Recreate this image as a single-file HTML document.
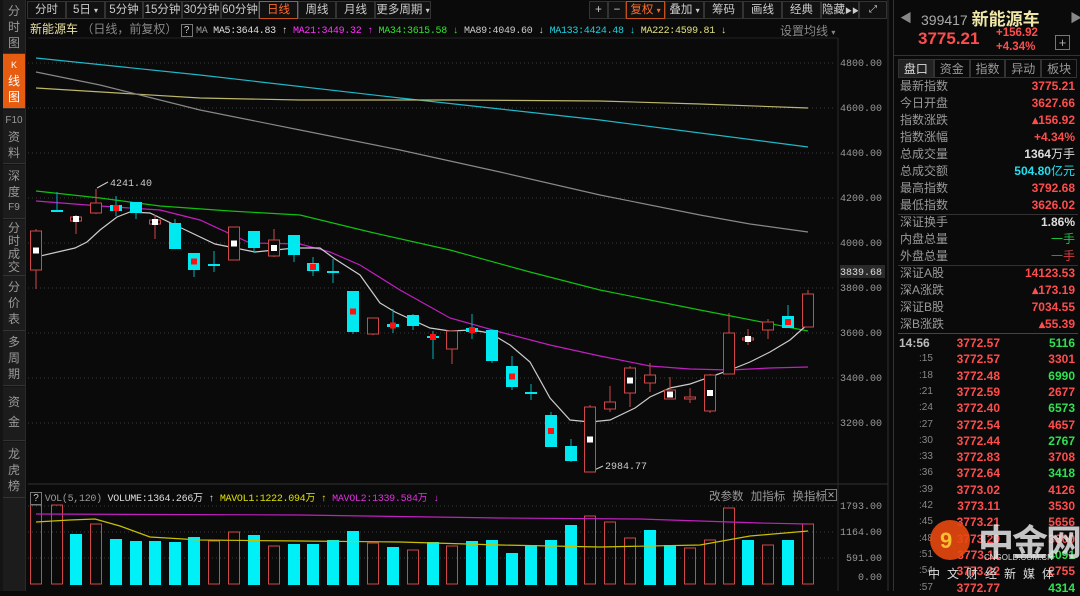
<!DOCTYPE html>
<html><head><meta charset="utf-8"><style>
*{margin:0;padding:0;box-sizing:border-box}
body{width:1080px;height:591px;background:#0a0a0a;overflow:hidden;font-family:"Liberation Sans","Noto Sans CJK SC",sans-serif;position:relative;color:#bbb}
.abs{position:absolute}
#side{left:0;top:0;width:26px;height:591px;background:#141414;border-right:1px solid #2a2a2a}
.si{position:absolute;left:3px;width:22px;background:#1c1c1c;border-bottom:1px solid #333;color:#999;font-size:12px;line-height:16px;text-align:center;display:flex;flex-direction:column;justify-content:center;overflow:hidden}
.si div{height:16px}
.si.on{background:#e65c10;color:#fff}
.tb{position:absolute;top:1px;height:18px;border:1px solid #333;background:#111;color:#ccc;font-size:11.5px;line-height:16px;text-align:center;white-space:nowrap;overflow:hidden}
.tb.on{border-color:#c4501a;color:#ff6a2a}
.mono{font-family:"Liberation Mono","Noto Sans CJK SC",monospace}
#rp{left:893px;top:0;width:187px;height:591px;background:#0a0a0a;border-left:1px solid #333}
.row{position:absolute;left:6px;width:175px;height:17px;font-size:12px;line-height:17px}
.row .l{color:#999;position:absolute;left:0}
.row .v{position:absolute;right:0;font-weight:bold;color:#ff4d4d}
.tk{position:absolute;left:5px;width:176px;height:16px;font-size:12px;line-height:16px}
.tk .t{position:absolute;left:0;color:#888}
.tk .p{position:absolute;left:29px;color:#ff4d4d;font-weight:bold;width:72px;text-align:right}
.tk .q{position:absolute;right:0;font-weight:bold}
</style></head><body>

<div id="side" class="abs">
<div class="si" style="top:0;height:54px"><div>分</div><div>时</div><div>图</div></div>
<div class="si on" style="top:54px;height:55px"><div style="font-size:9px">K</div><div>线</div><div>图</div></div>
<div class="si" style="top:110px;height:54px"><div style="font-size:10px">F10</div><div>资</div><div>料</div></div>
<div class="si" style="top:165px;height:54px"><div>深</div><div>度</div><div style="font-size:10px">F9</div></div>
<div class="si" style="top:220px;height:56px;line-height:13px"><div style="height:13px">分</div><div style="height:13px">时</div><div style="height:13px">成</div><div style="height:13px">交</div></div>
<div class="si" style="top:276px;height:55px"><div>分</div><div>价</div><div>表</div></div>
<div class="si" style="top:331px;height:55px"><div>多</div><div>周</div><div>期</div></div>
<div class="si" style="top:387px;height:54px"><div style="height:20px">资</div><div style="height:20px">金</div></div>
<div class="si" style="top:442px;height:56px"><div>龙</div><div>虎</div><div>榜</div></div>
<div class="si" style="top:498px;height:93px;border:none"></div>
</div>

<div class="tb" style="left:27px;width:39px">分时</div>
<div class="tb" style="left:66px;width:39px">5日 <span style="font-size:8px">▾</span></div>
<div class="tb" style="left:105px;width:38px">5分钟</div>
<div class="tb" style="left:143px;width:39px">15分钟</div>
<div class="tb" style="left:182px;width:39px">30分钟</div>
<div class="tb" style="left:221px;width:38px">60分钟</div>
<div class="tb on" style="left:259px;width:39px">日线</div>
<div class="tb" style="left:298px;width:38px">周线</div>
<div class="tb" style="left:336px;width:39px">月线</div>
<div class="tb" style="left:375px;width:56px">更多周期 <span style="font-size:8px">▾</span></div>
<div class="tb" style="left:589px;width:19px">+</div>
<div class="tb" style="left:608px;width:18px">−</div>
<div class="tb on" style="left:626px;width:39px">复权 <span style="font-size:8px">▾</span></div>
<div class="tb" style="left:665px;width:39px">叠加 <span style="font-size:8px">▾</span></div>
<div class="tb" style="left:704px;width:39px">筹码</div>
<div class="tb" style="left:743px;width:39px">画线</div>
<div class="tb" style="left:782px;width:39px">经典</div>
<div class="tb" style="left:821px;width:38px">隐藏<span style="font-size:7px">▶▶</span></div>
<div class="tb" style="left:859px;width:28px;font-size:10px">⤢</div>

<div class="abs" style="left:30px;top:22px;font-size:12px;line-height:14px;white-space:nowrap">
<span style="color:#e8e0a0">新能源车</span><span style="color:#888"> （日线，前复权）</span>
<span style="display:inline-block;border:1px solid #777;width:12px;height:13px;font-size:10px;line-height:11px;text-align:center;color:#ccc">?</span>
<span class="mono" style="font-size:10px;letter-spacing:-0.3px"><span style="color:#999">MA</span> <span style="color:#ddd">MA5:3644.83 ↑</span> <span style="color:#ff30ff">MA21:3449.32 ↑</span> <span style="color:#30e030">MA34:3615.58 ↓</span> <span style="color:#ccc">MA89:4049.60 ↓</span> <span style="color:#20d0e0">MA133:4424.48 ↓</span> <span style="color:#e0e080">MA222:4599.81 ↓</span></span>
</div>
<div class="abs" style="left:780px;top:22px;font-size:12px;color:#888;white-space:nowrap">设置均线 <span style="font-size:8px">▾</span></div>

<svg class="abs" style="left:0;top:0" width="893" height="591" id="ch">
<line x1="28" y1="38" x2="838" y2="38" stroke="#222"/>
<line x1="838" y1="38" x2="838" y2="591" stroke="#2a2a2a"/>
<line x1="888" y1="0" x2="888" y2="591" stroke="#333"/>
<line x1="28" y1="484" x2="888" y2="484" stroke="#333"/>
<g stroke="#3a3a3a" stroke-dasharray="1,3">
<line x1="28" y1="63" x2="836" y2="63"/><line x1="28" y1="108" x2="836" y2="108"/><line x1="28" y1="153" x2="836" y2="153"/><line x1="28" y1="198" x2="836" y2="198"/><line x1="28" y1="243" x2="836" y2="243"/><line x1="28" y1="288" x2="836" y2="288"/><line x1="28" y1="333" x2="836" y2="333"/><line x1="28" y1="378" x2="836" y2="378"/><line x1="28" y1="423" x2="836" y2="423"/>
<line x1="28" y1="506" x2="836" y2="506"/><line x1="28" y1="532" x2="836" y2="532"/><line x1="28" y1="558" x2="836" y2="558"/>
</g>
<g font-family="Liberation Mono,monospace" font-size="10" fill="#999" text-anchor="end">
<text x="882" y="66">4800.00</text><text x="882" y="111">4600.00</text><text x="882" y="156">4400.00</text><text x="882" y="201">4200.00</text><text x="882" y="246">4000.00</text><text x="882" y="291">3800.00</text><text x="882" y="336">3600.00</text><text x="882" y="381">3400.00</text><text x="882" y="426">3200.00</text>
<text x="882" y="509">1793.00</text><text x="882" y="535">1164.00</text><text x="882" y="561">591.00</text><text x="882" y="580">0.00</text>
</g>
<rect x="840" y="265" width="45" height="13" fill="#2a2a2a"/>
<text x="882" y="275" font-family="Liberation Mono,monospace" font-size="10" fill="#ddd" text-anchor="end">3839.68</text>
<g fill="none" stroke-width="1.2">
<polyline stroke="#20b8c8" points="36,58 200,75 400,98 600,120 808,147"/>
<polyline stroke="#bdb76b" points="36,88 200,98 300,100 450,100 600,101 700,104 808,108"/>
<polyline stroke="#888" points="36,72 100,85 200,110 300,130 400,150 500,172 600,195 700,215 750,224 808,232"/>
<polyline stroke="#10c010" points="36,191 100,198 160,206 230,211 300,215 370,232 450,250 530,272 600,290 700,310 808,331"/>
<polyline stroke="#c020c0" points="36,201 100,206 160,210 200,220 250,243 300,244 330,252 360,265 400,290 450,318 500,332 550,345 600,356 650,366 690,369 730,370 770,368 808,367"/>
<polyline stroke="#ccc" points="36,257 75,248 87,242 100,230 117,217 130,212 150,213 175,225 215,244 255,252 295,248 320,248 335,259 360,275 380,303 395,312 430,328 450,331 472,330 490,333 510,345 530,362 550,398 570,420 590,422 610,420 635,408 650,397 670,388 690,384 710,377 730,370 750,362 770,352 790,340 808,324"/>
</g>
<g font-family="Liberation Mono,monospace" font-size="10" fill="#ccc"><text x="110" y="186">4241.40</text><text x="605" y="469">2984.77</text></g>
<polyline points="108,182 97,188" stroke="#ccc" fill="none"/>
<polyline points="603,466 592,471" stroke="#ccc" fill="none"/>
<g id="cs"></g>
<g id="vb"></g>
<g fill="none" stroke-width="1.2">
<polyline stroke="#c020c0" points="36,514 300,515 500,518 640,519 760,523 808,524"/>
<polyline stroke="#c8c000" points="36,522 70,520 95,519 120,526 150,537 200,540 300,541 400,542 500,545 600,547 700,545 750,536 808,531"/>
</g>
</svg>

<div class="abs" style="left:30px;top:489px;font-size:10px;white-space:nowrap" >
<span style="display:inline-block;border:1px solid #777;width:12px;height:13px;line-height:11px;text-align:center;color:#ccc">?</span>
<span class="mono" style="letter-spacing:-0.3px"><span style="color:#999">VOL(5,120)</span> <span style="color:#ddd">VOLUME:1364.266万 ↑</span> <span style="color:#e0e000">MAVOL1:1222.094万 ↑</span> <span style="color:#e030e0">MAVOL2:1339.584万 ↓</span></span>
</div>
<div class="abs" style="left:709px;top:488px;font-size:11.5px;color:#999;word-spacing:4px;white-space:nowrap">改参数 加指标 换指标</div>
<div class="abs" style="left:825px;top:489px;width:12px;height:12px;border:1px solid #777;font-size:9px;line-height:10px;text-align:center;color:#aaa">✕</div>

<div id="rp" class="abs">
<div class="abs" style="left:6px;top:9px;color:#888;font-size:12px">◀</div>
<div class="abs" style="left:176px;top:9px;color:#888;font-size:12px">▶</div>
<div class="abs" style="left:27px;top:5px;font-size:14px;color:#aaa;white-space:nowrap">399417 <span style="font-size:17px;font-weight:bold;color:#f0e8a8">新能源车</span></div>
<div class="abs" style="left:24px;top:29px;font-size:17px;font-weight:bold;color:#ff4d4d">3775.21</div>
<div class="abs" style="left:102px;top:26px;font-size:11.5px;color:#ff4d4d;line-height:14px;font-weight:bold">+156.92<br>+4.34%</div>
<div class="abs" style="left:161px;top:35px;width:15px;height:15px;border:1px solid #777;color:#aaa;font-size:13px;line-height:13px;text-align:center">+</div>
<div class="abs" style="left:0;top:55px;width:187px;border-top:1px solid #333"></div>
<div class="abs" style="left:4px;top:59px;width:179px;height:19px;display:flex;font-size:12px;line-height:18px;text-align:center;color:#999">
<div style="flex:1;background:#222;color:#ddd;border:1px solid #333">盘口</div><div style="flex:1;border:1px solid #333">资金</div><div style="flex:1;border:1px solid #333">指数</div><div style="flex:1;border:1px solid #333">异动</div><div style="flex:1;border:1px solid #333">板块</div></div>
<div class="row" style="top:78px"><span class="l">最新指数</span><span class="v">3775.21</span></div>
<div class="row" style="top:95px"><span class="l">今日开盘</span><span class="v">3627.66</span></div>
<div class="row" style="top:112px"><span class="l">指数涨跌</span><span class="v">▴156.92</span></div>
<div class="row" style="top:129px"><span class="l">指数涨幅</span><span class="v">+4.34%</span></div>
<div class="row" style="top:146px"><span class="l">总成交量</span><span class="v" style="color:#ddd">1364<span style="font-weight:normal">万手</span></span></div>
<div class="row" style="top:163px"><span class="l">总成交额</span><span class="v" style="color:#20e0f0">504.80<span style="font-weight:normal">亿元</span></span></div>
<div class="row" style="top:180px"><span class="l">最高指数</span><span class="v">3792.68</span></div>
<div class="row" style="top:197px"><span class="l">最低指数</span><span class="v">3626.02</span></div>
<div class="abs" style="left:4px;top:214px;width:180px;border-top:1px solid #333"></div>
<div class="row" style="top:214px"><span class="l">深证换手</span><span class="v" style="color:#ddd">1.86%</span></div>
<div class="row" style="top:231px"><span class="l">内盘总量</span><span class="v" style="color:#20c040;font-weight:normal">一手</span></div>
<div class="row" style="top:248px"><span class="l">外盘总量</span><span class="v" style="color:#d04040;font-weight:normal">一手</span></div>
<div class="abs" style="left:4px;top:265px;width:180px;border-top:1px solid #333"></div>
<div class="row" style="top:265px"><span class="l">深证A股</span><span class="v">14123.53</span></div>
<div class="row" style="top:282px"><span class="l">深A涨跌</span><span class="v">▴173.19</span></div>
<div class="row" style="top:299px"><span class="l">深证B股</span><span class="v">7034.55</span></div>
<div class="row" style="top:316px"><span class="l">深B涨跌</span><span class="v">▴55.39</span></div>
<div class="abs" style="left:4px;top:333px;width:180px;border-top:1px solid #444"></div>
<div id="tks"></div>
<div class="abs" style="left:36px;top:520px;width:40px;height:40px;border-radius:50%;background:#e84810;opacity:.9"></div>
<div class="abs" style="left:46px;top:528px;font-size:22px;color:#f8c030;font-weight:bold">9</div>
<div class="abs" style="left:84px;top:514px;font-size:36px;font-weight:bold;color:rgba(230,230,230,.85);letter-spacing:-2px;white-space:nowrap">中金网</div>
<div class="abs" style="left:90px;top:553px;font-size:8px;color:#ddd">CNGOLD.COM.CN</div>
<div class="abs" style="left:34px;top:565px;font-size:12px;color:#ddd;letter-spacing:7px;white-space:nowrap">中文财经新媒体</div>
</div>

<script>
var C=[[36,231,270,229,289,'u','w'],[57,210,212,192,212,'d'],[76,217,221,215,234,'u','w'],[96,203,213,189,214,'u'],[116,205,211,196,216,'d','r'],[136,202,213,202,219,'d'],[155,220,224,215,239,'u','w'],[175,223,249,219,249,'d'],[194,253,270,253,277,'d','r'],[214,264,266,251,272,'d'],[234,227,260,227,260,'u','w'],[254,231,248,231,253,'d'],[274,240,256,229,257,'u','w'],[294,235,255,235,262,'d'],[313,263,271,257,276,'d','r'],[333,271,273,259,283,'d'],[353,291,332,291,334,'d','r'],[373,318,334,318,335,'u'],[393,324,327,309,333,'d','r'],[413,315,326,314,330,'d'],[433,336,338,331,359,'d','r'],[452,331,349,331,364,'u'],[472,328,332,314,339,'d','r'],[492,330,361,330,363,'d'],[512,366,387,356,390,'d','r'],[531,392,394,384,400,'d'],[551,415,447,412,447,'d','r'],[571,446,461,439,462,'d'],[590,407,472,405,472,'u','w'],[610,402,409,386,412,'u'],[630,368,393,366,407,'u','w'],[650,375,383,363,392,'u'],[670,390,399,377,399,'u','w'],[690,397,399,388,403,'u'],[710,375,411,374,413,'u','w'],[729,333,374,313,374,'u'],[748,338,340,329,345,'u','w'],[768,322,330,319,339,'u'],[788,316,328,305,328,'d','r'],[808,294,327,290,327,'u']];
var s='';
C.forEach(function(c){var x=c[0],col=c[5]=='u'?'#d04848':'#00e8f0',h=Math.max(c[2]-c[1],2);
s+='<line x1="'+x+'" y1="'+c[3]+'" x2="'+x+'" y2="'+c[4]+'" stroke="'+(c[5]=='u'?'#d04848':'#00b0b8')+'"/>';
if(c[5]=='u')s+='<rect x="'+(x-5.5)+'" y="'+c[1]+'" width="11" height="'+h+'" fill="#0a0a0a" stroke="'+col+'"/>';
else s+='<rect x="'+(x-6)+'" y="'+c[1]+'" width="12" height="'+h+'" fill="'+col+'"/>';
if(c[6]){var m=(c[1]+c[2])/2;s+='<rect x="'+(x-3)+'" y="'+(m-3)+'" width="6" height="6" fill="'+(c[6]=='w'?'#fff':'#ff1010')+'"/>';}
});
document.getElementById('cs').innerHTML=s;
var V=[505,505,534,524,539,541,541,542,537,541,532,535,546,544,544,540,531,543,547,550,542,546,541,540,553,545,540,525,516,522,538,530,545,548,540,508,540,545,540,524];
var T=['u','u','d','u','d','d','d','d','d','u','u','d','u','d','d','d','d','u','d','u','d','u','d','d','d','d','d','d','u','u','u','d','d','u','u','u','d','u','d','u'];
s='';
V.forEach(function(v,i){var x=C[i][0];
if(T[i]=='u')s+='<rect x="'+(x-5.5)+'" y="'+v+'" width="11" height="'+(584-v)+'" fill="none" stroke="#d04848"/>';
else s+='<rect x="'+(x-6)+'" y="'+v+'" width="12" height="'+(585-v)+'" fill="#00f0f8"/>';});
document.getElementById('vb').innerHTML=s;
var tk=[['14:56','3772.57','5116',1],[':15','3772.57','3301',0],[':18','3772.48','6990',1],[':21','3772.59','2677',0],[':24','3772.40','6573',1],[':27','3772.54','4657',0],[':30','3772.44','2767',1],[':33','3772.83','3708',0],[':36','3772.64','3418',1],[':39','3773.02','4126',0],[':42','3773.11','3530',0],[':45','3773.21','5656',0],[':48','3773.20','3300',0],[':51','3773.11','4091',1],[':54','3773.32','2755',0],[':57','3772.77','4314',1]];
s='';tk.forEach(function(r,i){s+='<div class="tk" style="top:'+(335+i*16.3)+'px"><span class="t" style="'+(i==0?'color:#bbb;font-weight:bold':'padding-left:20px;font-size:10px')+'">'+r[0]+'</span><span class="p">'+r[1]+'</span><span class="q" style="color:'+(r[3]?'#30e050':'#ff4d4d')+'">'+r[2]+'</span></div>';});
document.getElementById('tks').innerHTML=s;
</script>
</body></html>
